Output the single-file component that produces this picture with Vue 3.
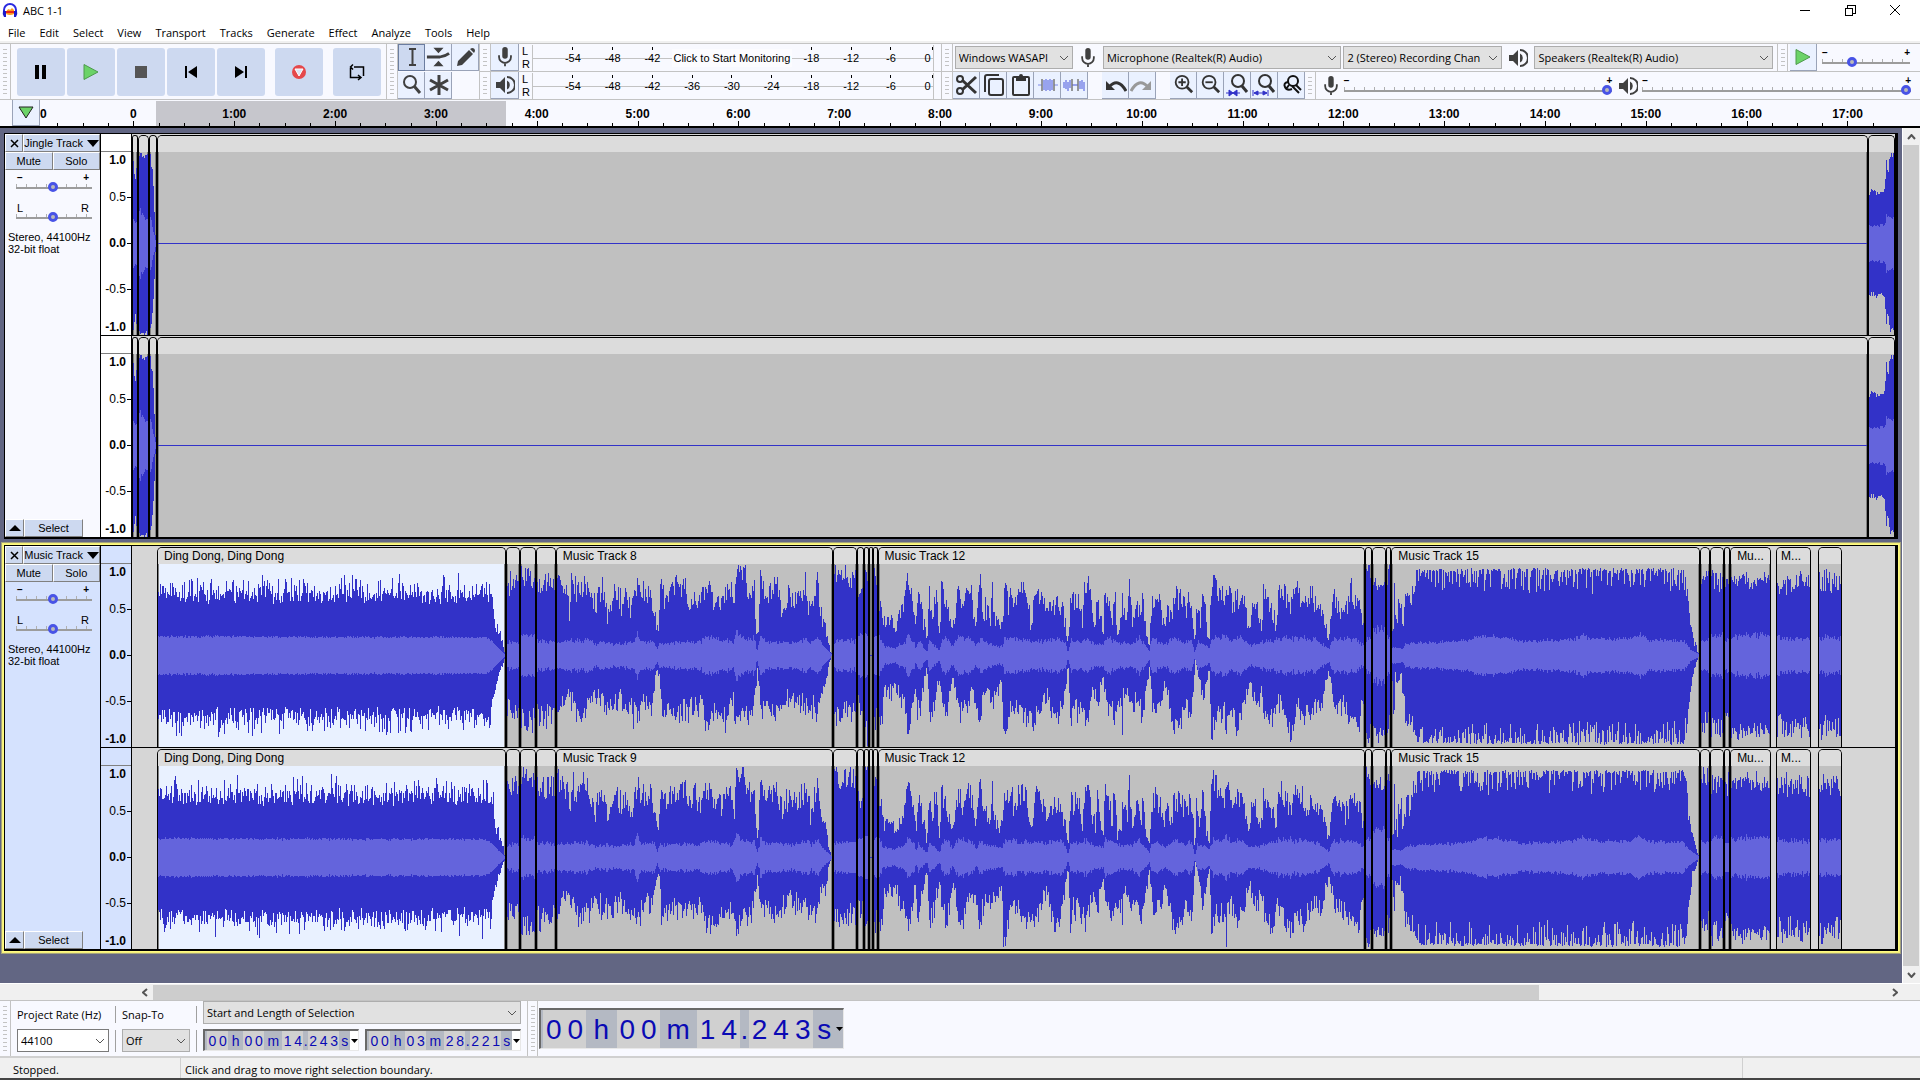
<template>
  <div class="app">
    <svg class="defs" aria-hidden="true">
      <symbol id="mic" viewBox="0 0 20 24">
        <rect x="7" y="1" width="6" height="13" rx="3" fill="#404040" />
        <path d="M3.500 10v2a6.500 6.500 0 0 0 13 0v-2M10 18.500V22" fill="none" stroke="#404040" stroke-width="2" />
      </symbol>
      <symbol id="speaker" viewBox="0 0 20 20">
        <path d="M1 7h4l5-5v16l-5-5H1z" fill="#404040" />
        <path d="M12 5.500a5 5 0 0 1 0 9z" fill="#404040" />
        <path d="M12 2a8 8 0 0 1 0 16" fill="none" stroke="#404040" stroke-width="2" />
      </symbol>
      <symbol id="play" viewBox="0 0 16 18">
        <path d="M1 1.500L15 9L1 16.500z" fill="#6bd368" stroke="#4d9a4c" stroke-width="1" />
      </symbol>
      <symbol id="pause" viewBox="0 0 14 14"><path d="M1 0h4v14H1zM8 0h4v14H8z" /></symbol>
      <symbol id="stop" viewBox="0 0 14 14"><path d="M1 1h12v12H1z" fill="#555" /></symbol>
      <symbol id="start" viewBox="0 0 14 14"><path d="M1 1h2v12H1zM13 1v12L4 7z" /></symbol>
      <symbol id="end" viewBox="0 0 14 14"><path d="M11 1h2v12h-2zM1 1v12l9-6z" /></symbol>
      <symbol id="record" viewBox="0 0 16 16">
        <circle cx="8" cy="8" r="7" fill="#e5484b" />
        <path d="M4 5h8l-4 7z" fill="#dce3f3" stroke="#fff" stroke-width="1" />
      </symbol>
      <symbol id="loop" viewBox="0 0 18 18">
        <path d="M6 4H15.500V13M12 14.500H2.500V5M5 1.500L2.500 4L5 6.500M10 12L13 14.500L10 17" fill="none" stroke="#000" stroke-width="1.500" />
      </symbol>
      <symbol id="ibeam" viewBox="0 0 24 24">
        <path d="M9 4h7M9 20h7M12.500 5v14" fill="none" stroke="#404040" stroke-width="2" />
      </symbol>
      <symbol id="envelope" viewBox="0 0 26 24">
        <path d="M8 2h11l-5.500 6zM8 22h11l-5.500-6z" fill="#404040" />
        <path d="M1 12h14q6-1 10-4" fill="none" stroke="#404040" stroke-width="3" />
      </symbol>
      <symbol id="pencil" viewBox="0 0 24 24">
        <path d="M4 21l1-5L16 5l4 4L9 20zM17 4l2-1q3 0 3 3l-1 2z" fill="#404040" />
      </symbol>
      <symbol id="lens" viewBox="0 0 24 24">
        <circle cx="11" cy="9" r="6" fill="none" stroke="#404040" stroke-width="2" />
        <path d="M15 13l6 7" stroke="#404040" stroke-width="3" />
      </symbol>
      <symbol id="multi" viewBox="0 0 24 24">
        <path d="M13 2v20M4 7l18 10M22 7L4 17" stroke="#404040" stroke-width="3" />
      </symbol>
      <symbol id="cut" viewBox="0 0 24 24">
        <g fill="none" stroke="#333" stroke-width="2">
          <circle cx="6" cy="6" r="3" /><circle cx="6" cy="18" r="3" />
        </g>
        <path d="M8 7l14 13M8 17L22 4" stroke="#333" stroke-width="3" />
      </symbol>
      <symbol id="copy" viewBox="0 0 24 24">
        <g fill="none" stroke="#333" stroke-width="2">
          <rect x="8" y="6" width="14" height="16" rx="2" /><path d="M4 19V4q0-2 2-2h12" />
        </g>
      </symbol>
      <symbol id="paste" viewBox="0 0 24 24">
        <rect x="5" y="4" width="16" height="18" rx="1" fill="none" stroke="#333" stroke-width="2" />
        <path d="M8 3h3a2 2 0 0 1 4 0h3v5H8z" fill="#333" />
      </symbol>
      <symbol id="trim" viewBox="0 0 24 24">
        <path d="M3 12h4M19 12h4" stroke="#7d88e8" stroke-width="1" />
        <path d="M9 7v10M11 6v12M13 7v10M15 6v12M17 7v10" stroke="#7d88e8" stroke-width="1.500" />
        <path d="M7 6v12M19 6v12" stroke="#777" stroke-width="1.500" />
      </symbol>
      <symbol id="silence" viewBox="0 0 24 24">
        <path d="M2 15V9M4 7v9M6 9v9M8 7v8M18 8v8M20 7v9M22 9v9M10 12h6" fill="none" stroke="#7d88e8" stroke-width="1.500" />
        <path d="M10 6v12M16 6v12" stroke="#777" stroke-width="1.500" />
      </symbol>
      <symbol id="undo" viewBox="0 0 24 24">
        <path d="M3 8v9h9z" fill="currentColor" />
        <path d="M6 14q9-10 17 4" fill="none" stroke="currentColor" stroke-width="3" />
      </symbol>
      <symbol id="zoomer" viewBox="0 0 24 24">
        <circle cx="11" cy="9" r="7" fill="none" stroke="#333" stroke-width="2" />
        <path d="M16 14l6 6" stroke="#333" stroke-width="3" />
      </symbol>
      <symbol id="fit" viewBox="0 0 24 24">
        <circle cx="13" cy="8" r="6" fill="none" stroke="#333" stroke-width="2" />
        <path d="M17 13l5 6" stroke="#333" stroke-width="3" />
      </symbol>
      <symbol id="toggle" viewBox="0 0 24 24">
        <g fill="none" stroke="#111" stroke-width="2">
          <circle cx="14" cy="8" r="5" /><path d="M9 9q-5 1-3 5t7 2M10 12l-3 4M13 13l7 7M17 12l5 5" />
        </g>
      </symbol>
      <symbol id="chevron" viewBox="0 0 10 6">
        <path d="M1 1l4 4 4-4" fill="none" stroke="#555" stroke-width="1" />
      </symbol>
    </svg>

    <header class="title-bar">
      <svg width="16" height="16" viewBox="0 0 16 16">
        <path d="M2 12V8a6 6 0 0 1 12 0v4" fill="none" stroke="#2a2ae0" stroke-width="2" />
        <path d="M4 12l1-4 2-1 1 1 2-2 2 2v4q-4 2-8 0z" fill="#ff9a1a" />
        <path d="M4 10h8" stroke="#e8271c" stroke-width="2" />
        <path d="M1 9h3v6H2q-2-3-1-6zM15 9h-3v6h2q2-3 1-6z" fill="#1a1acc" />
      </svg>
      <h1>ABC 1-1</h1>
      <div class="window-buttons">
        <button aria-label="Minimize"><svg width="12" height="12"><path d="M1 6h10" stroke="#000" shape-rendering="crispEdges" /></svg></button>
        <button aria-label="Restore"><svg width="12" height="12"><path d="M1 4h7v7H1zM3 4V1h8v8H8" fill="none" stroke="#000" shape-rendering="crispEdges" /></svg></button>
        <button aria-label="Close"><svg width="12" height="12"><path d="M1 1l10 10M11 1L1 11" stroke="#000" /></svg></button>
      </div>
    </header>

    <nav class="menu">
      <a v-for="item in menu" :key="item" href="#">{{ item }}</a>
    </nav>

    <section class="toolbars">
      <div class="bar transport">
        <span class="grip tall"></span>
        <button v-for="b in transport" :key="b.icon" :class="['big-btn', b.icon]" :aria-label="b.label">
          <svg :width="b.size" :height="b.size"><use :href="'#' + b.icon" /></svg>
        </button>
      </div>

      <div class="bar tools">
        <span class="grip tall"></span>
        <div class="tool-grid">
          <button v-for="(t, i) in tools" :key="t" class="tool" :class="{ down: i === 0 }" :aria-label="t">
            <svg width="24" height="24"><use :href="'#' + t" /></svg>
          </button>
        </div>
      </div>

      <div class="stack meters">
        <div v-for="m in meters" :key="m.icon" class="bar">
          <span class="grip"></span>
          <button class="tool" :aria-label="m.label"><svg width="20" height="22"><use :href="'#' + m.icon" /></svg></button>
          <div class="lr"><span>L</span><span>R</span></div>
          <div class="meter">
            <span v-for="(n, i) in m.scale" :key="i" :class="{ hint: n.length > 3 }">{{ n }}</span>
          </div>
        </div>
      </div>

      <div class="stack right-side">
        <div class="bar devices">
          <span class="grip"></span>
          <label class="combo host"><select aria-label="Audio host"><option>Windows WASAPI</option></select><svg><use href="#chevron" /></svg></label>
          <svg class="dev-icon" width="18" height="22"><use href="#mic" /></svg>
          <label class="combo wide"><select aria-label="Recording device"><option>Microphone (Realtek(R) Audio)</option></select><svg><use href="#chevron" /></svg></label>
          <label class="combo chan"><select aria-label="Recording channels"><option>2 (Stereo) Recording Chan</option></select><svg><use href="#chevron" /></svg></label>
          <svg class="dev-icon" width="20" height="20"><use href="#speaker" /></svg>
          <label class="combo wide"><select aria-label="Playback device"><option>Speakers (Realtek(R) Audio)</option></select><svg><use href="#chevron" /></svg></label>
          <span class="grip second"></span>
          <button class="tool" aria-label="Play at speed"><svg width="16" height="18"><use href="#play" /></svg></button>
          <label class="slider speed">
            <span class="ends"><b>−</b><b>+</b></span>
            <input type="range" min="0" max="100" value="32" aria-label="Playback speed" />
          </label>
        </div>
        <div class="bar edit">
          <span class="grip"></span>
          <button v-for="t in ['cut', 'copy', 'paste', 'trim', 'silence']" :key="t" class="tool" :aria-label="t">
            <svg width="24" height="24"><use :href="'#' + t" /></svg>
          </button>
          <span class="space"></span>
          <button class="tool undo" aria-label="Undo"><svg width="24" height="24"><use href="#undo" /></svg></button>
          <button class="tool redo" aria-label="Redo"><svg width="24" height="24"><use href="#undo" /></svg></button>
          <span class="space"></span>
          <button class="tool" aria-label="Zoom in">
            <svg width="22" height="22" viewBox="0 0 24 24"><use href="#zoomer" /><path d="M7 9h8M11 5v8" stroke="#333" stroke-width="2" /></svg>
          </button>
          <button class="tool" aria-label="Zoom out">
            <svg width="22" height="22" viewBox="0 0 24 24"><use href="#zoomer" /><path d="M7 9h8" stroke="#333" stroke-width="2" /></svg>
          </button>
          <button class="tool" aria-label="Fit selection">
            <svg width="24" height="24"><use href="#fit" /><path d="M1 20h14M8 20l-4-3v6zM8 20l4-3v6z" fill="#3232c8" stroke="#3232c8" /></svg>
          </button>
          <button class="tool" aria-label="Fit project">
            <svg width="24" height="24"><use href="#fit" /><path d="M1 17v6M16 17v6M2 20h13M2 20l4-2v4zM15 20l-4-2v4z" fill="#3232c8" stroke="#3232c8" /></svg>
          </button>
          <button class="tool" aria-label="Zoom toggle"><svg width="24" height="24"><use href="#toggle" /></svg></button>
          <span class="grip"></span>
          <svg class="dev-icon" width="18" height="22"><use href="#mic" /></svg>
          <label class="slider volume">
            <span class="ends"><b>−</b><b>+</b></span>
            <input type="range" value="100" aria-label="Recording volume" />
          </label>
          <svg class="dev-icon" width="20" height="20"><use href="#speaker" /></svg>
          <label class="slider volume">
            <span class="ends"><b>−</b><b>+</b></span>
            <input type="range" value="100" aria-label="Playback volume" />
          </label>
        </div>
      </div>
    </section>

    <section class="ruler">
      <button class="pin" aria-label="Pinned play head">
        <svg width="16" height="14"><path d="M1 1h14L8 12z" fill="#6bd368" stroke="#222" /></svg>
      </button>
      <div class="pre">0</div>
      <div class="minutes">
        <div class="ruler-selection"></div>
        <div v-for="n in 18" :key="n" class="minute">
          <span class="stamp">{{ n === 1 ? '0' : n - 1 + ':00' }}</span>
          <span class="ticks"><i></i><i></i><i class="major"></i><i></i></span>
        </div>
      </div>
    </section>

    <main class="workspace">
      <div class="tracks">
        <article v-for="track in tracks" :key="track.name" class="track" :class="{ selected: track.selected }">
          <aside class="panel">
            <div class="row">
              <button class="close" aria-label="Close track"><svg width="9" height="9"><path d="M1 1l7 7M8 1L1 8" stroke="#000" stroke-width="1.500" /></svg></button>
              <button class="name">{{ track.name }}<svg width="12" height="7"><path d="M0 0h12L6 7z" /></svg></button>
            </div>
            <div class="row">
              <button class="half">Mute</button>
              <button class="half">Solo</button>
            </div>
            <label class="slider">
              <span class="ends"><b>−</b><b>+</b></span>
              <input type="range" value="48" aria-label="Gain" />
            </label>
            <label class="slider pan">
              <span class="ends"><span>L</span><span>R</span></span>
              <input type="range" value="48" aria-label="Pan" />
            </label>
            <p>Stereo, 44100Hz<br />32-bit float</p>
            <div class="row foot">
              <button class="close" aria-label="Collapse"><svg width="12" height="6"><path d="M0 6h12L6 0z" /></svg></button>
              <button class="select">Select</button>
            </div>
          </aside>

          <div class="channels">
            <div v-for="(clips, c) in track.channels" :key="c" class="channel">
              <div class="v-ruler">
                <div class="v-head"></div>
                <div class="v-scale">
                  <b>1.0</b><span>0.5</span><b>0.0</b><span>-0.5</span><b>-1.0</b>
                </div>
              </div>
              <div class="lane">
                <div
                  v-for="(clip, i) in clips"
                  :key="i"
                  :class="[clip.gap ? 'gap' : 'clip', { active: clip.active, apart: clip.apart }]"
                  :style="{ flexGrow: clip.gap ? clip.w : clip.w - 2 }"
                >
                  <template v-if="!clip.gap">
                    <div class="clip-name">{{ clip.label }}</div>
                    <svg class="wave" :viewBox="`0 0 ${clip.w - 2} 183`" preserveAspectRatio="none">
                      <path :d="clip.peak" fill="#3232c8" />
                      <path :d="clip.rms" fill="#6464dc" />
                    </svg>
                  </template>
                </div>
              </div>
            </div>
          </div>
        </article>
      </div>
      <div class="v-scroll">
        <button aria-label="Scroll up"><svg width="9" height="6"><path d="M1 5l3.500-4L8 5" fill="none" stroke="#555" stroke-width="2" /></svg></button>
        <div class="thumb"></div>
        <button aria-label="Scroll down"><svg width="9" height="6"><path d="M1 1l3.500 4L8 1" fill="none" stroke="#555" stroke-width="2" /></svg></button>
      </div>
    </main>

    <div class="h-scroll">
      <button aria-label="Scroll left"><svg width="6" height="9"><path d="M5 1L1 4.500L5 8" fill="none" stroke="#555" stroke-width="2" /></svg></button>
      <div class="rail"><div class="thumb"></div></div>
      <button aria-label="Scroll right"><svg width="6" height="9"><path d="M1 1l4 3.500L1 8" fill="none" stroke="#555" stroke-width="2" /></svg></button>
    </div>

    <section class="selection-bar">
      <span class="grip tall"></span>
      <div class="field rate">
        <label for="rate">Project Rate (Hz)</label>
        <span class="combo white"><select id="rate"><option>44100</option></select><svg><use href="#chevron" /></svg></span>
      </div>
      <div class="dividers"><i></i><i></i></div>
      <div class="field snap">
        <label for="snap">Snap-To</label>
        <span class="combo"><select id="snap"><option>Off</option></select><svg><use href="#chevron" /></svg></span>
      </div>
      <div class="dividers"><i></i><i></i></div>
      <div class="range">
        <label class="combo"><select aria-label="Selection mode"><option>Start and Length of Selection</option></select><svg><use href="#chevron" /></svg></label>
        <div class="times">
          <div v-for="(t, n) in times" :key="n" class="time">
            <span v-for="(ch, i) in t" :key="i" :class="timeClass(ch)">{{ ch }}</span>
            <button aria-label="Time format"><svg width="7" height="4"><path d="M0 0h7L3.500 4z" /></svg></button>
          </div>
        </div>
      </div>
      <span class="grip tall second"></span>
      <div class="time large">
        <span v-for="(ch, i) in times[0]" :key="i" :class="timeClass(ch)">{{ ch }}</span>
        <button aria-label="Time format"><svg width="7" height="4"><path d="M0 0h7L3.500 4z" /></svg></button>
      </div>
    </section>

    <footer class="status">
      <span class="state">Stopped.</span>
      <span class="message">Click and drag to move right selection boundary.</span>
      <span class="extra"></span>
    </footer>
  </div>
</template>

<script setup>
const menu = ['File', 'Edit', 'Select', 'View', 'Transport', 'Tracks', 'Generate', 'Effect', 'Analyze', 'Tools', 'Help']

const transport = [
  { icon: 'pause', label: 'Pause', size: 14 },
  { icon: 'play', label: 'Play', size: 18 },
  { icon: 'stop', label: 'Stop', size: 14 },
  { icon: 'start', label: 'Skip to start', size: 14 },
  { icon: 'end', label: 'Skip to end', size: 14 },
  { icon: 'record', label: 'Record', size: 16 },
  { icon: 'loop', label: 'Loop', size: 18 },
]
const tools = ['ibeam', 'envelope', 'pencil', 'lens', 'multi']
const meters = [
  { icon: 'mic', label: 'Record meter', scale: ['-54', '-48', '-42', 'Click to Start Monitoring', '-18', '-12', '-6', '0'] },
  { icon: 'speaker', label: 'Playback meter', scale: ['-54', '-48', '-42', '-36', '-30', '-24', '-18', '-12', '-6', '0'] },
]
const times = [[...'00h00m14.243s'], [...'00h03m28.221s']]
const timeClass = (ch) => (/\d/.test(ch) ? 'digit' : ch === '.' ? 'dot' : 'unit-' + ch)

// Envelopes: flat lists of position, amplitude. Positions are stretched over the clip.
const shapes = {
  ding: {
    up: [0, .64, 335, .64, 338, .5, 340, .3, 344, .22, 348, .08, 349, .03],
    down: [0, .64, 335, .62, 338, .4, 340, .3, 344, .18, 348, .06, 349, .03],
    rms: [0, .2, 330, .19, 336, .15, 349, .01],
    spike: .22, jitter: .15, rough: .1,
  },
  eight: {
    up: [172, .85, 185, .72, 200, .72, 208, .45, 215, .8, 230, .65, 262, .78, 280, .6, 287, .42, 295, .65, 315, .66, 322, .38, 350, .7, 365, .5, 375, .64, 395, .5, 412, .72, 415, .91, 418, .7, 455, .66, 465, .45, 472, .3, 476, .22, 480, .65, 485, .74, 500, .55, 515, .68, 558, .74, 570, .5, 585, .68, 600, .55, 615, .68, 635, .76, 640, .5, 655, .68, 665, .55, 690, .75, 704, .45, 712, .95, 735, .9, 745, .7, 755, .57, 765, .75, 770, .25, 776, .2, 785, .9, 800, .55, 812, .68, 830, .72, 850, .5, 870, .65, 890, .58, 920, .72, 935, .42, 955, .8, 965, .4, 980, .3, 990, .1, 997, .02],
    down: [172, .53, 200, .43, 240, .6, 262, .55, 285, .4, 300, .5, 340, .5, 365, .45, 390, .53, 412, .66, 430, .5, 455, .5, 470, .2, 478, .15, 485, .6, 520, .58, 540, .52, 560, .6, 590, .52, 605, .5, 620, .76, 650, .62, 680, .65, 700, .45, 712, .75, 735, .58, 755, .66, 765, .45, 775, .15, 785, .66, 800, .52, 830, .62, 850, .5, 870, .45, 910, .5, 940, .53, 955, .63, 965, .35, 980, .3, 990, .08, 997, .01],
    rms: [172, .13, 262, .16, 290, .11, 320, .14, 350, .11, 405, .14, 412, .25, 420, .15, 465, .14, 472, .05, 480, .13, 600, .13, 617, .18, 690, .15, 700, .12, 712, .27, 720, .2, 745, .16, 765, .18, 773, .04, 785, .2, 800, .14, 900, .13, 925, .17, 935, .12, 955, .19, 970, .1, 997, .01],
    spike: .12, jitter: .24, rough: .25,
  },
  twelve: {
    up: [114, .6, 118, .68, 122, .5, 127, .33, 150, .4, 160, .27, 172, .4, 185, .5, 197, .75, 210, .6, 220, .3, 228, .7, 240, .4, 253, .15, 258, .65, 270, .45, 280, .68, 290, .15, 294, .9, 300, .65, 312, .5, 328, .25, 340, .65, 355, .55, 373, .75, 385, .55, 395, .3, 406, .78, 415, .5, 438, .4, 442, .8, 448, .4, 470, .3, 475, .55, 483, .7, 490, .5, 497, .68, 505, .55, 532, .74, 545, .62, 555, .3, 568, .72, 585, .6, 600, .45, 620, .55, 645, .5, 655, .35, 663, .1, 671, .72, 680, .55, 695, .55, 705, .35, 712, .7, 726, .73, 735, .4, 743, .3, 748, .65, 765, .2, 770, .72, 780, .62, 790, .35, 797, .68, 806, .25, 818, .35, 820, .6, 835, .4, 840, .8, 850, .35, 865, .55, 875, .35, 881, .7, 890, .2, 900, .12, 906, .6, 930, .6, 942, .3, 950, .5, 965, .4, 973, .62, 990, .6, 1008, .5, 1015, .62, 1028, .35, 1032, .02, 1036, .6, 1048, .35, 1055, .72, 1065, .3, 1075, .15, 1078, .65, 1087, .87, 1100, .65, 1120, .65, 1123, .82, 1140, .55, 1155, .6, 1175, .6, 1190, .25, 1200, .65, 1215, .45, 1228, .3, 1232, .78, 1245, .5, 1262, .45, 1268, .25, 1275, .68, 1297, .65, 1310, .5, 1322, .77, 1340, .5, 1345, .7, 1360, .45, 1367, .65, 1390, .55, 1405, .4, 1421, .2, 1435, .6, 1460, .5, 1475, .45, 1486, .7, 1500, .55, 1515, .5, 1525, .3],
    down: [114, .7, 122, .75, 127, .35, 150, .38, 160, .3, 170, .42, 185, .5, 198, .8, 210, .5, 220, .25, 225, .65, 240, .35, 253, .12, 260, .7, 275, .5, 290, .2, 295, .55, 310, .62, 330, .25, 345, .62, 365, .6, 385, .35, 406, .7, 415, .5, 430, .4, 442, .5, 470, .3, 475, .92, 485, .85, 492, .55, 520, .55, 540, .66, 565, .72, 580, .55, 600, .4, 627, .76, 645, .55, 655, .35, 663, .1, 669, .6, 671, .9, 675, .5, 715, .66, 735, .42, 750, .52, 765, .2, 775, .58, 800, .58, 818, .5, 820, .92, 824, .4, 835, .35, 850, .5, 865, .52, 880, .6, 900, .15, 910, .56, 935, .48, 945, .3, 970, .76, 990, .76, 1005, .4, 1015, .72, 1028, .45, 1032, .03, 1045, .25, 1055, .48, 1075, .15, 1080, .86, 1095, .6, 1120, .6, 1123, 1, 1126, .6, 1135, .5, 1155, .72, 1175, .55, 1190, .25, 1205, .5, 1225, .4, 1235, .58, 1260, .7, 1268, .45, 1280, .55, 1310, .82, 1330, .55, 1345, .7, 1370, .56, 1400, .5, 1421, .2, 1440, .52, 1470, .56, 1500, .76, 1512, .7, 1525, .35],
    rms: [114, .18, 127, .1, 160, .08, 185, .12, 197, .2, 215, .14, 220, .06, 228, .15, 253, .03, 258, .15, 290, .05, 297, .15, 308, .2, 328, .09, 345, .2, 365, .16, 375, .19, 395, .09, 410, .17, 430, .12, 470, .09, 480, .18, 600, .14, 635, .18, 655, .12, 663, .02, 671, .16, 700, .13, 715, .18, 740, .12, 765, .1, 770, .18, 815, .13, 850, .12, 870, .18, 900, .05, 906, .17, 945, .11, 975, .18, 1005, .12, 1020, .18, 1032, .02, 1040, .14, 1075, .08, 1085, .19, 1105, .16, 1123, .22, 1140, .15, 1165, .18, 1190, .1, 1260, .15, 1297, .2, 1320, .16, 1345, .18, 1390, .15, 1421, .06, 1435, .17, 1500, .17, 1525, .1],
    spike: .08, jitter: .24, rough: .25,
  },
  fifteen: {
    up: [145, .28, 149, .3, 150, .93, 152, .45, 158, .4, 163, .72, 166, .3, 168, .98, 171, .35, 175, .35, 178, .66, 196, .72, 208, .94, 240, .95, 935, .95, 943, .85, 950, .48, 958, .27, 965, .18, 975, .03],
    down: [145, .3, 149, .85, 152, .3, 165, .3, 175, .45, 180, .75, 205, .85, 212, .95, 300, .96, 935, .97, 943, .85, 950, .55, 958, .3, 965, .15, 975, .02],
    rms: [145, .08, 175, .07, 180, .12, 280, .14, 350, .15, 380, .2, 440, .19, 500, .14, 640, .17, 660, .21, 690, .17, 790, .17, 815, .22, 840, .16, 935, .15, 955, .06, 975, .01],
    spike: -.26, jitter: .03, rough: .18,
  },
  fade: { up: [0, .97, 4, .7, 7, .1], down: [0, .95, 4, .7, 7, .1], rms: [0, .28, 7, .03], spike: 0, jitter: .1, rough: .1 },
  ending: {
    up: [0, .5, 1, .56, 17, .56, 18, .95, 20, .7, 22, .95, 26, .98],
    down: [0, .55, 17, .57, 18, .95, 20, .7, 22, .95, 26, .95],
    rms: [0, .18, 17, .19, 18, .3, 26, .26],
    spike: .03, jitter: .06, rough: .1,
  },
}

const flat = (up, down, rms, jitter = .25) => ({
  up: [0, up, 1, up], down: [0, down, 1, down], rms: [0, rms, 1, rms], spike: .08, jitter, rough: .25,
})

function level(points, u) {
  const x = points[0] + u * (points[points.length - 2] - points[0])
  let i = 0
  while (i < points.length - 4 && points[i + 2] < x) i += 2
  const span = points[i + 2] - points[i] || 1
  const k = Math.min(1, Math.max(0, (x - points[i]) / span))
  return points[i + 1] + k * (points[i + 3] - points[i + 1])
}

function random(seed) {
  let s = seed
  return () => {
    s = (s * 1664525 + 1013904223) % 4294967296
    return s / 4294967296
  }
}

function draw(w, shape, seed) {
  if (!shape) return { peak: `M0 91H${w}V92H0Z`, rms: '' }
  const rnd = random(seed * 7919 + w)
  const amp = (list, u) => {
    const base = level(list, u)
    const quiet = Math.min(1, base * 2)
    return Math.min(1, Math.max(.005, base + quiet * (shape.spike * rnd() ** 3 + shape.jitter * (rnd() - .5))))
  }
  let peak = ''
  let rms = ''
  for (let i = 0; i < w; i++) {
    const u = i / Math.max(1, w - 1)
    const top = Math.round(91.5 - 91 * amp(shape.up, u))
    const bottom = Math.round(91.5 + 91 * amp(shape.down, u))
    const r = Math.round(91 * level(shape.rms, u) * (1 + shape.rough * (rnd() + rnd() - .8)))
    peak += `M${i} ${top}h1V${bottom}h-1Z`
    rms += `M${i} ${Math.max(top, 91 - r)}h1V${Math.min(bottom, 92 + r)}h-1Z`
  }
  return { peak, rms }
}

// start, end, envelope, label
const jingle = [
  [132, 138, flat(.8, .8, .22)],
  [138, 149, flat(.95, .97, .3, .06)],
  [149, 157, shapes.fade],
  [157, 1869, null],
  [1869, 1896, shapes.ending],
]
const music = (title) => [
  [157, 506, shapes.ding, 'Ding Dong, Ding Dong'],
  [506, 520, flat(.75, .58, .13)],
  [520, 536, flat(.85, .7, .2)],
  [536, 556, flat(.76, .62, .14)],
  [556, 833, shapes.eight, title],
  [833, 857, flat(.84, .62, .15)],
  [857, 864, flat(.65, .55, .2)],
  [864, 869, flat(.9, .82, .23)],
  [869, 873, null],
  [873, 878, flat(.85, .7, .2)],
  [878, 1366, shapes.twelve, 'Music Track 12'],
  [1366, 1373, flat(.9, .8, .17)],
  [1373, 1387, flat(.76, .82, .28, .12)],
  [1387, 1392, flat(.88, .75, .2)],
  [1392, 1701, shapes.fifteen, 'Music Track 15'],
  [1701, 1711, flat(.88, .7, .15)],
  [1711, 1725, flat(.8, .8, .2)],
  [1725, 1731, flat(.78, .62, .15)],
  [1731, 1772, flat(.8, .8, .2, .15), 'Mu...'],
  [1777, 1812, flat(.76, .76, .17), 'M...'],
  [1819, 1843, flat(.8, .78, .18)],
]

function layout(list, seed, end) {
  const out = []
  let x = 132
  list.forEach(([from, to, shape, label], i) => {
    if (from > x) out.push({ gap: true, w: from - x })
    const w = to - from
    out.push({ w, label, active: label?.startsWith('Ding'), apart: from > 1731, ...draw(w - 2, shape, seed + i) })
    x = to
  })
  if (end > x) out.push({ gap: true, w: end - x })
  return out
}

const tracks = [
  { name: 'Jingle Track', selected: false, channels: [layout(jingle, 1, 1896), layout(jingle, 1, 1896)] },
  { name: 'Music Track', selected: true, channels: [layout(music('Music Track 8'), 3, 1896), layout(music('Music Track 9'), 4, 1896)] },
]
</script>

<style>
body { margin: 0; }
</style>

<style scoped>
.app {
  display: flex;
  flex-direction: column;
  min-height: 100vh;
  background: #f0f0f0;
  color: #000;
  font-family: 'Open Sans', 'Noto Sans', sans-serif;
  font-size: 11px;
  overflow: hidden;
}
.app * { box-sizing: border-box; }
.defs { position: absolute; width: 0; height: 0; }
button {
  display: flex;
  align-items: center;
  justify-content: center;
  padding: 0;
  border: 0;
  background: none;
  color: inherit;
  font: inherit;
}
svg { flex: none; }

.title-bar {
  display: flex;
  align-items: center;
  gap: 5px;
  height: 24px;
  padding: 0 12px 4px 2px;
  background: #fff;
}
.title-bar h1 { margin: 0; font-size: 11px; font-weight: 400; }
.window-buttons { display: flex; gap: 33px; margin-left: auto; padding-right: 7px; }

.menu {
  display: flex;
  gap: 14px;
  height: 17px;
  padding-left: 8px;
  background: #fff;
  line-height: 18px;
}
.menu a { color: #000; text-decoration: none; }

.toolbars {
  display: flex;
  height: 59px;
  border-top: 2px solid #f0f0f0;
  background: #f8f9ff;
}
.bar {
  display: flex;
  align-items: center;
  height: 28px;
  border-top: 1px solid #c3c3c3;
  background: #f8f9ff;
}
.bar.transport, .bar.tools {
  height: 57px;
  border-bottom: 1px solid #c3c3c3;
  border-right: 1px solid #c3c3c3;
}
.grip {
  flex: none;
  align-self: stretch;
  width: 11px;
  border-right: 1px solid #c3c3c3;
  background: repeating-linear-gradient(#c3c3c3 0 1px, transparent 1px 4px) 3px 5px / 4px calc(100% - 8px) no-repeat;
}
.transport { flex: none; gap: 2px; padding-right: 5px; }
.transport .grip { margin-right: 4px; }
.big-btn {
  width: 48px;
  height: 48px;
  border-radius: 3px;
  background: #cdd9f0;
}
.big-btn.record, .big-btn.loop { margin-left: 8px; }
.tools { flex: none; }
.tool-grid { display: grid; grid-template-columns: repeat(3, 27px); grid-auto-rows: 28px; }
.tool {
  flex: none;
  width: 27px;
  height: 27px;
  border-right: 1px solid #9aa3b8;
  border-bottom: 1px solid #9aa3b8;
  background: #eaf1ff;
}
.tool.down { border: 1px solid #6b7da0; background: #cdd9f0; }
.tool.undo { color: #333; }
.tool.redo { color: #999; }
.redo svg { transform: scaleX(-1); }

.stack { display: flex; flex-direction: column; border-bottom: 1px solid #c3c3c3; }
.meters { flex: 460 1 0; border-right: 1px solid #c3c3c3; font-family: 'Liberation Sans', sans-serif; font-size: 11px; }
.meters .tool { width: 28px; padding-left: 1px; }
.lr { display: flex; flex-direction: column; width: 13px; padding-left: 3px; line-height: 13px; }
.meter {
  display: flex;
  flex: 1;
  height: 26px;
  margin-right: 7px;
  padding-left: 20px;
  border-left: 1px solid #c3c3c3;
  border-right: 1px solid #c3c3c3;
  background: linear-gradient(#c3c3c3, #c3c3c3) 0 13px / 100% 1px no-repeat;
}
.meter span {
  flex: 1 1 0;
  background: linear-gradient(#000, #000) 50% 2px / 1px 3px no-repeat;
  line-height: 26px;
  text-align: center;
}
.meter span:last-child { flex-grow: .5; padding-right: 2px; background-position: 100% 2px; text-align: right; }
.meter .hint {
  flex-grow: 3;
  align-self: center;
  background: #fcfcff;
  line-height: 18px;
  white-space: nowrap;
}
.right-side { flex: 977 1 0; min-width: 0; }
.combo { position: relative; display: flex; height: 23px; min-width: 0; }
.combo select {
  width: 100%;
  padding: 0 20px 0 3px;
  border: 1px solid #adadad;
  border-radius: 0;
  appearance: none;
  background: #e1e1e1;
  color: #000;
  font: inherit;
  text-overflow: clip;
}
.combo svg { position: absolute; top: 9px; right: 4px; width: 10px; height: 6px; pointer-events: none; }
.combo.white select { border-color: #7a7a7a; background: #fff; }
.devices .combo { margin-left: 2px; }
.host { flex: 119 1 0; }
.wide { flex: 240 1 0; }
.chan { flex: 160 1 0; }
.dev-icon { margin: 0 4px 0 6px; }
.devices .second { margin-left: 4px; border-left: 1px solid #c3c3c3; }
.devices .tool { margin-left: 2px; }
.space { flex: none; width: 14px; }

.slider { display: flex; flex-direction: column; font-family: 'Liberation Sans', sans-serif; font-size: 11px; }
.slider .ends { display: flex; justify-content: space-between; height: 8px; line-height: 8px; }
.slider b { font-size: 10px; }
.slider input {
  width: 100%;
  height: 10px;
  margin: 0;
  appearance: none;
  background:
    linear-gradient(#9c9c9c, #9c9c9c) 0 5px / 100% 2px no-repeat,
    repeating-linear-gradient(90deg, #b0b0b0 0 1px, transparent 1px 10px) 0 2px / 100% 3px no-repeat;
}
.slider input::-webkit-slider-thumb {
  width: 10px;
  height: 10px;
  border: 3px solid #4853e6;
  border-radius: 50%;
  appearance: none;
  background: #b9b9b9;
}
.speed { flex: none; width: 88px; margin: 0 10px 0 5px; }
.volume { flex: 1; }
.edit .volume:last-child { margin-right: 9px; }

.ruler {
  display: flex;
  height: 28px;
  padding-left: 12px;
  border-bottom: 2px solid #000;
  background: #f8f9ff;
  font: bold 12px 'Liberation Sans', sans-serif;
}
.pin { width: 28px; border: 1px solid #9aa3b8; border-top: 0; background: #eaf1ff; }
.pre {
  width: 43px;
  line-height: 28px;
  background: linear-gradient(#000, #000) 17px 100% / 1px 3px no-repeat;
}
.minutes { position: relative; display: flex; flex: 1; margin-right: 22px; }
.ruler-selection { position: absolute; top: 1px; bottom: 0; left: 4%; width: 19.300%; background: #c6c6cc; }
.minute { position: relative; display: flex; flex: 1 1 0; flex-direction: column; text-align: center; }
.stamp { height: 21px; line-height: 28px; }
.ticks { display: flex; align-items: flex-end; height: 5px; }
.ticks i { flex: 1; height: 3px; border-left: 1px solid #000; }
.ticks .major { height: 5px; }

.workspace { display: flex; flex: 1; background: #626683; }
.tracks { flex: 1; min-width: 0; padding: 5px 4px 24px 1px; font-family: 'Liberation Sans', sans-serif; }
.track {
  display: flex;
  margin-left: 3px;
  border: 1px solid #000;
  border-width: 1px 3px 2px 1px;
}
.track.selected { margin-top: 6px; box-shadow: 0 0 0 1px #fffb80, 0 0 0 2px #f5f07a, 0 0 0 3px #a5a47c; }
.panel {
  display: flex;
  flex-direction: column;
  width: 96px;
  border-right: 1px solid #000;
  background: #f8f9ff;
  font-size: 11px;
}
.selected .panel, .selected .v-ruler { background: #d5e2fe; }
.row { display: flex; height: 18px; }
.row button {
  border: 1px solid #fff;
  border-right-color: #808080;
  border-bottom-color: #808080;
  background: #cdd9f0;
}
.close { width: 19px; }
.name { flex: 1; gap: 4px; white-space: nowrap; }
.half { flex: 1; }
.panel .slider { width: 76px; margin: 4px 0 0 11px; }
.panel .slider.pan { margin-top: 12px; }
.panel .ends { padding: 0 3px 0 1px; }
.panel p { margin: 9px 0 0 3px; line-height: 12px; font-size: 11px; white-space: nowrap; }
.foot { margin-top: auto; }
.select { width: 59px; }

.channels { flex: 1; min-width: 0; }
.channel { display: flex; height: 201px; }
.channel + .channel { height: 202px; border-top: 1px solid #000; }
.v-ruler { width: 31px; border-right: 1px solid #000; background: #fff; font-size: 12px; }
.v-head { height: 18px; border-bottom: 1px solid #808080; }
.v-scale { display: flex; flex-direction: column; text-align: right; }
.v-scale > * {
  height: 46px;
  padding-right: 5px;
  background: linear-gradient(#000, #000) 100% 50% / 4px 1px no-repeat;
  line-height: 46px;
}
.v-scale > :first-child, .v-scale > :last-child { height: 22px; background: none; line-height: 16px; }
.v-scale > :last-child { line-height: 30px; }

.lane { display: flex; flex: 1; min-width: 0; background: #d6d6d6; overflow: hidden; }
.gap { flex: 0 1 0; }
.clip {
  flex: 0 1 2px;
  min-width: 0;
  margin-top: 1px;
  border: 1px solid #000;
  border-bottom: 0;
  border-radius: 5px 5px 0 0;
  background: #c0c0c0;
  overflow: hidden;
}
.clip-name {
  height: 16px;
  padding-left: 6px;
  background: #dcdcdc;
  font-size: 12px;
  line-height: 16px;
  white-space: nowrap;
}
.apart .clip-name { padding-left: 4px; }
.wave { display: block; width: 100%; height: 183px; box-shadow: inset 1px 0 #808080, inset -1px 0 #808080; shape-rendering: crispEdges; }
.apart .wave { box-shadow: none; }
.active .wave { background: #e9f1ff; }

.v-scroll { display: flex; flex-direction: column; width: 18px; border-left: 1px solid #fff; background: #f0f0f0; }
.v-scroll button { height: 17px; }
.v-scroll .thumb { flex: 1; margin-right: 1px; background: #cdcdcd; }
.h-scroll { display: flex; height: 17px; padding: 1px 17px 0 136px; border-top: 1px solid #fff; }
.h-scroll button { width: 17px; }
.rail { flex: 1; }
.rail .thumb { width: 80%; height: 15px; background: #cdcdcd; }

.selection-bar {
  display: flex;
  height: 58px;
  border-top: 1px solid #c3c3c3;
  border-bottom: 2px solid #d0d0d0;
  background: #f8f9ff;
}
.field { display: flex; flex-direction: column; gap: 1px; }
.field label { height: 27px; line-height: 27px; white-space: nowrap; }
.rate { width: 92px; margin-left: 6px; }
.snap { width: 68px; }
.dividers { display: flex; flex-direction: column; gap: 7px; width: 13px; padding: 5px 0 0 6px; }
.dividers i { width: 1px; height: 17px; background: #a0a0a0; }
.dividers i + i { height: 22px; }
.range { display: flex; flex-direction: column; gap: 5px; width: 318px; }
.times { display: flex; gap: 6px; }
.time {
  display: flex;
  flex: 1;
  height: 22px;
  padding-left: 2px;
  border: 1px solid #e8e8e8;
  border-top: 2px solid #696969;
  border-left: 2px solid #696969;
  background: #b4b9c3;
  color: #0a0ab4;
  font: 14px 'Liberation Sans', sans-serif;
}
.time span { flex: 22 1 0; line-height: 21px; text-align: center; }
.time .digit { background: #d0d0d0; }
.time .dot { flex-grow: 9; }
.time .unit-h { flex-grow: 31; }
.time .unit-m { flex-grow: 38; }
.time button { width: 8px; background: #fff; }
.selection-bar .second { margin-left: 6px; border-left: 1px solid #c3c3c3; }
.time.large { flex: none; width: 305px; height: 41px; margin: 7px 0 0 1px; font-size: 28px; }
.time.large span { line-height: 40px; }
.time.large button { background: #b4b9c3; }

.status {
  display: flex;
  height: 22px;
  padding-left: 13px;
  border-bottom: 2px solid #454545;
  line-height: 23px;
}
.state { width: 168px; border-right: 1px solid #d0d0d0; }
.message { flex: 1; padding-left: 4px; }
.extra { width: 178px; border-left: 1px solid #d0d0d0; }
</style>
